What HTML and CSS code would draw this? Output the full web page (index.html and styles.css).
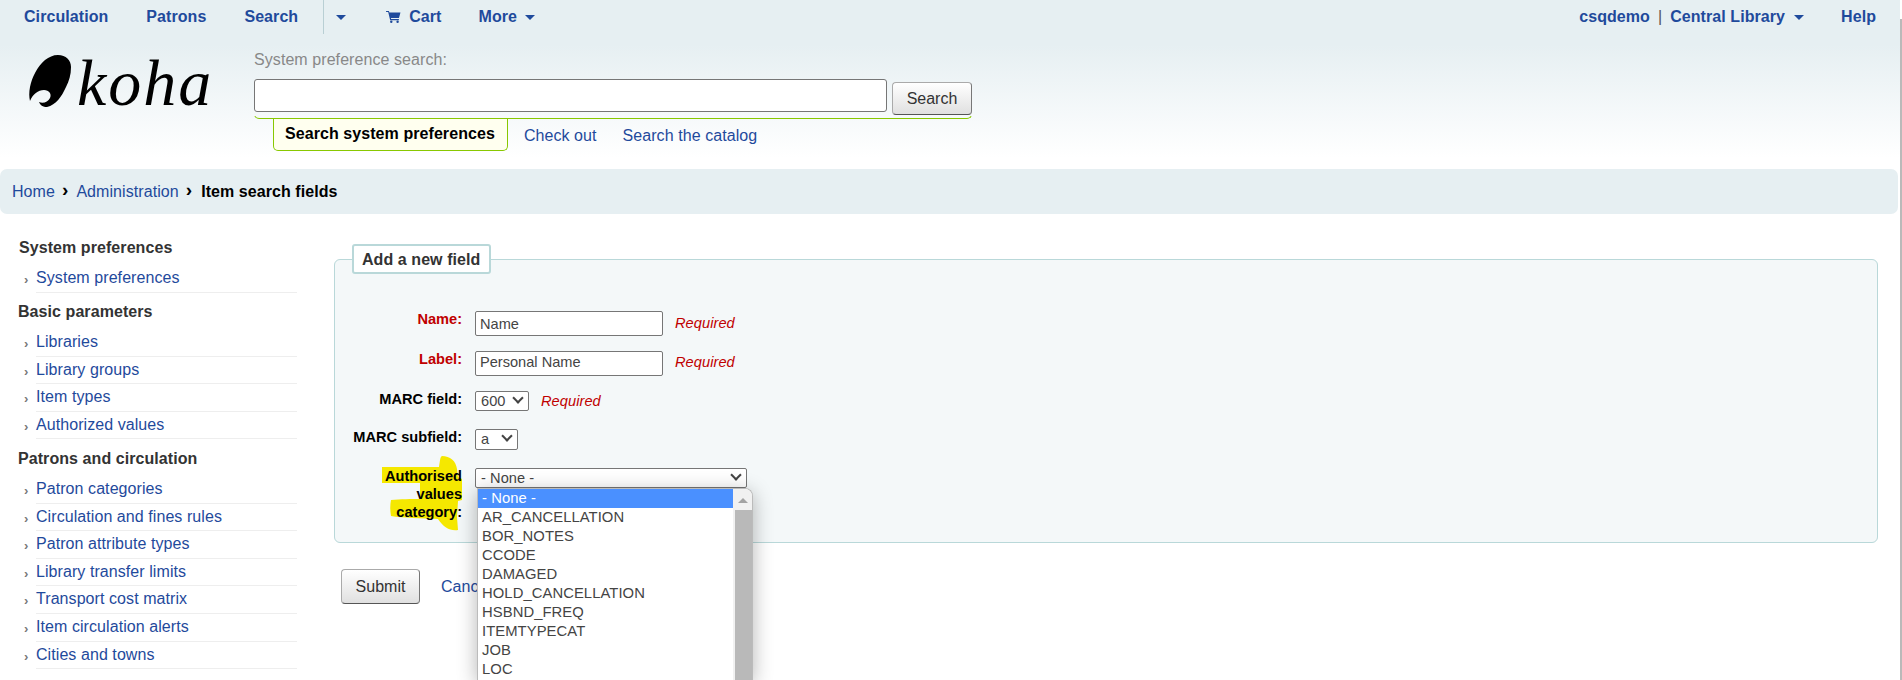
FILE: index.html
```html
<!DOCTYPE html>
<html lang="en">
<head>
    <meta charset="UTF-8">
    <title>Koha - Item search fields</title>
    <link rel="stylesheet" href="styles.css">
</head>
<body>
    <div class="header">
        <div class="navbar">
            <ul class="nav-left">
                <li><a href="#">Circulation</a></li>
                <li><a href="#">Patrons</a></li>
                <li class="nav-search"><a href="#">Search</a></li>
                <li class="nav-arrow"><span class="caret"></span></li>
                <li class="nav-cart">
                    <svg class="cart-icon" viewBox="0 0 16 14" width="15" height="13">
                        <path d="M0 1h3l.6 1.6H15.5l-1.6 6H5.2l.3 1.2h8.3v1.2H4.4L2.3 2.2H0z" fill="#1f4a9c"/>
                        <circle cx="5.6" cy="12.6" r="1.3" fill="#1f4a9c"/>
                        <circle cx="12.4" cy="12.6" r="1.3" fill="#1f4a9c"/>
                    </svg>
                    <a href="#">Cart</a>
                </li>
                <li class="nav-more"><a href="#">More</a><span class="caret caret-after"></span></li>
            </ul>
            <ul class="nav-right">
                <li class="user-info"><a href="#">csqdemo</a><span class="sep">|</span><a href="#">Central Library</a><span class="caret caret-after"></span></li>
                <li><a href="#">Help</a></li>
            </ul>
        </div>
        <div class="masthead">
            <div class="logo">
                <svg viewBox="0 0 43 52" width="43" height="52">
                    <path d="M29 0C37 0 42 5 42 12C42 20 40 26 37 32C33 41 27 50 18 52C14 52 11 50 10 47C14 49 19 47 21 43C23 39 20 35 15 35C9 35 4 39 1 46C0 42 0 37 1 32C3 22 8 12 16 5C20 2 24 0 29 0Z" fill="#000"/>
                </svg>
                <span class="logo-text">koha</span>
            </div>
            <div class="search-box">
                <label class="search-label">System preference search:</label>
                <div class="search-row">
                    <input type="text" class="search-input">
                    <button class="btn btn-search">Search</button>
                </div>
                <div class="tabs-rule"></div>
                <div class="tabs">
                    <span class="tab-active">Search system preferences</span>
                    <a href="#">Check out</a>
                    <a href="#">Search the catalog</a>
                </div>
            </div>
        </div>
    </div>

    <div class="breadcrumb">
        <a href="#">Home</a><span class="crumb-sep">›</span><a href="#">Administration</a><span class="crumb-sep">›</span><strong>Item search fields</strong>
    </div>

    <div class="main">
        <div class="sidebar">
            <h5 class="first">System preferences</h5>
            <ul>
                <li><a href="#">System preferences</a></li>
            </ul>
            <h5>Basic parameters</h5>
            <ul>
                <li><a href="#">Libraries</a></li>
                <li><a href="#">Library groups</a></li>
                <li><a href="#">Item types</a></li>
                <li><a href="#">Authorized values</a></li>
            </ul>
            <h5>Patrons and circulation</h5>
            <ul>
                <li><a href="#">Patron categories</a></li>
                <li><a href="#">Circulation and fines rules</a></li>
                <li><a href="#">Patron attribute types</a></li>
                <li><a href="#">Library transfer limits</a></li>
                <li><a href="#">Transport cost matrix</a></li>
                <li><a href="#">Item circulation alerts</a></li>
                <li><a href="#">Cities and towns</a></li>
            </ul>
        </div>

        <div class="content">
            <fieldset class="rows">
                <legend>Add a new field</legend>
                <div class="form-row row-name">
                    <label class="required">Name:</label>
                    <input type="text" value="Name">
                    <span class="req-note">Required</span>
                </div>
                <div class="form-row row-label">
                    <label class="required">Label:</label>
                    <input type="text" value="Personal Name">
                    <span class="req-note">Required</span>
                </div>
                <div class="form-row row-field">
                    <label>MARC field:</label>
                    <span class="fake-select sel-field">600</span>
                    <span class="req-note">Required</span>
                </div>
                <div class="form-row row-sub">
                    <label>MARC subfield:</label>
                    <span class="fake-select sel-sub">a</span>
                </div>
                <div class="form-row row-auth">
                    <label class="auth-label">
                        <svg class="marker" viewBox="0 0 80 76" width="80" height="76">
                            <path d="M0 12H57C58 6 58 2 60 1C68 1 74 6 75 14L76 22L80 24V45L76 46L75 62L76 75C68 76 62 73 56 64C40 63 20 63 9 61C8 55 8 50 9 45C18 44 30 44 38 44V28H0Z" fill="#f5e800"/>
                        </svg>
                        <span class="auth-text">Authorised values category:</span>
                    </label>
                    <div class="select-wrap">
                        <span class="fake-select sel-auth">- None -</span>
                        <div class="dropdown">
                            <div class="options">
                                <div class="option selected">- None -</div>
                                <div class="option">AR_CANCELLATION</div>
                                <div class="option">BOR_NOTES</div>
                                <div class="option">CCODE</div>
                                <div class="option">DAMAGED</div>
                                <div class="option">HOLD_CANCELLATION</div>
                                <div class="option">HSBND_FREQ</div>
                                <div class="option">ITEMTYPECAT</div>
                                <div class="option">JOB</div>
                                <div class="option">LOC</div>
                            </div>
                            <div class="list-scroll"><span class="scroll-up"></span><span class="scroll-thumb"></span></div>
                        </div>
                    </div>
                </div>
            </fieldset>
            <div class="actions">
                <button class="btn btn-submit">Submit</button>
                <a href="#" class="cancel">Cancel</a>
            </div>
        </div>
    </div>
    <div class="page-scroll"></div>
</body>
</html>
```

FILE: styles.css
```css
:root {
    --link: #1f4a9c;
    --pale: #e6eff2;
    --green: #88c800;
    --red: #c00000;
}

html, body {
    height: 680px;
    overflow: hidden;
}

body {
    margin: 0;
    padding: 0;
    background-color: white;
    font-family: "Liberation Sans", Arial, sans-serif;
    font-size: 16px;
    letter-spacing: 0.07px;
    color: #333;
}

a {
    color: var(--link);
    text-decoration: none;
}

ul {
    list-style: none;
    margin: 0;
    padding: 0;
}

.header {
    height: 169px;
    margin-right: 2px;
    background: linear-gradient(to bottom, var(--pale) 0, var(--pale) 45px, #fff 158px);
}

.navbar {
    display: flex;
    justify-content: space-between;
    height: 34px;
    font-weight: bold;
}

.nav-left, .nav-right {
    display: flex;
}

.nav-left li, .nav-right li {
    padding-top: 8px;
}

.navbar a {
    line-height: 16px;
}

.nav-left li {
    margin-left: 24px;
    margin-right: 14px;
}

.nav-left li.nav-search {
    margin-right: 0;
    padding-right: 25px;
    border-right: 1px solid #b9cfd4;
}

.nav-left li.nav-arrow {
    margin-left: 12px;
    margin-right: 40px;
}

.nav-left li.nav-cart {
    margin-left: 0;
    margin-right: 37px;
    padding-top: 9px;
    display: flex;
    align-items: flex-start;
}

.nav-left li.nav-more {
    margin-left: 0;
}

.cart-icon {
    margin: 1px 8px 0 0;
}

.caret {
    display: inline-block;
    width: 0;
    height: 0;
    border-top: 5px solid var(--link);
    border-left: 5px solid transparent;
    border-right: 5px solid transparent;
    vertical-align: 2px;
}

.caret-after {
    margin-left: 8px;
}

.user-info .caret-after {
    margin-left: 9px;
}

.nav-right {
    padding-right: 24px;
}

.user-info {
    margin-right: 37px;
}

.sep {
    margin: 0 8px;
    font-weight: normal;
    color: #555;
}

.masthead {
    display: flex;
}

.logo {
    display: flex;
    gap: 5px;
    width: 254px;
    padding: 21px 0 0 29px;
    box-sizing: border-box;
    height: 80px;
    color: #000;
}

.logo-text {
    font-family: "Liberation Serif", serif;
    font-style: italic;
    font-size: 66px;
    line-height: 60px;
    letter-spacing: 2px;
    margin-top: -2px;
}

.search-box {
    position: relative;
    width: 718px;
}

.search-label {
    display: block;
    margin-top: 18px;
    height: 27px;
    line-height: 16px;
    color: #888;
}

.search-row {
    display: flex;
    gap: 5px;
}

.search-input {
    box-sizing: border-box;
    width: 633px;
    height: 33px;
    margin: 0;
    border: 1px solid #767676;
    border-radius: 3px;
    background: #fff;
}

.btn {
    box-sizing: border-box;
    border: 1px solid #aaa;
    border-bottom-color: #555;
    border-right-color: #777;
    border-radius: 4px;
    background: linear-gradient(to bottom, #fff, #e0e0e0);
    font-family: "Liberation Sans", Arial, sans-serif;
    font-size: 16px;
    color: #333;
    padding: 0;
}

.btn-search {
    width: 80px;
    height: 33px;
    margin-top: 3px;
}

.tabs-rule {
    box-sizing: border-box;
    height: 6px;
    margin-top: -2px;
    border-bottom: 1px solid var(--green);
    border-left: 1px solid var(--green);
    border-right: 1px solid var(--green);
    border-radius: 0 0 5px 5px;
    clip-path: inset(3px 0 0 0);
}

.tabs {
    display: flex;
    align-items: flex-start;
    margin-left: 19px;
    height: 32px;
}

.tab-active {
    box-sizing: border-box;
    height: 33px;
    margin-top: -1px;
    padding: 8px 12px 0 11px;
    border: 1px solid var(--green);
    border-top: 0;
    border-radius: 0 0 5px 5px;
    background: #ffffef;
    color: #000;
    font-weight: bold;
    line-height: 16px;
}

.tabs a {
    margin-top: 9px;
    margin-left: 16px;
    margin-right: 10px;
    line-height: 16px;
}

.breadcrumb {
    box-sizing: border-box;
    height: 45px;
    margin-right: 4px;
    padding: 14px 12px 0;
    background: var(--pale);
    border-radius: 7px;
    line-height: 16px;
}

.breadcrumb strong {
    margin-left: 1px;
    color: #000;
}

.crumb-sep {
    margin: 0 8px 0 7px;
    color: #000;
    font-weight: bold;
    font-size: 19px;
    line-height: 14px;
    vertical-align: 1px;
}

.main {
    display: flex;
}

.sidebar {
    box-sizing: border-box;
    width: 334px;
    padding-left: 18px;
}

.sidebar h5 {
    margin: 9.5px 0 7px;
    font-size: 16px;
    line-height: 20px;
    color: #333;
    font-weight: bold;
}

.sidebar h5.first {
    margin-top: 24px;
    padding-left: 1px;
}

.sidebar li {
    box-sizing: border-box;
    position: relative;
    width: 261px;
    height: 27.6px;
    margin-left: 18px;
    border-bottom: 1px solid #eeeeee;
    line-height: 18px;
    padding-top: 4px;
}

.sidebar li::before {
    content: "›";
    position: absolute;
    left: -12px;
    top: 7px;
    color: #777;
    font-size: 13px;
    font-weight: bold;
    line-height: 15px;
}

.content {
    flex: 1;
    padding-top: 30px;
}

fieldset.rows {
    box-sizing: border-box;
    width: 1544px;
    height: 299px;
    margin: 0;
    padding: 0;
    background: #f4f8f9;
    border: 1px solid #b9d8d9;
    border-radius: 6px;
}

legend {
    box-sizing: border-box;
    height: 30px;
    margin-left: 17px;
    padding: 6px 9px 4px 8px;
    background: #fff;
    border: 2px solid #b9d8d9;
    border-radius: 3px;
    font-weight: bold;
    font-size: 16px;
    line-height: 16px;
    color: #333;
}

.form-row {
    display: flex;
    align-items: flex-start;
}

.form-row label {
    width: 120px;
    margin: -1px 13px 0 7px;
    text-align: right;
    font-weight: bold;
    font-size: 14.6px;
    letter-spacing: 0;
    line-height: 18px;
    color: #000;
    flex-shrink: 0;
}

.form-row label.required {
    color: var(--red);
}

.form-row .auth-label {
    width: 100px;
    margin-left: 27px;
}

.form-row input {
    box-sizing: border-box;
    width: 188px;
    height: 25px;
    margin: 0;
    padding: 0 4px;
    border: 1px solid #767676;
    border-radius: 2px;
    background: #fff;
    font-family: "Liberation Sans", Arial, sans-serif;
    font-size: 14.6px;
    color: #444;
}

.row-label input {
    padding-bottom: 3px;
}

.req-note {
    margin-left: 12px;
    margin-top: 3px;
    font-size: 14.6px;
    font-style: italic;
    color: var(--red);
    line-height: 18px;
}

.row-name {
    margin-top: 37px;
}

.row-label {
    margin-top: 15px;
}

.row-field {
    margin-top: 15px;
}

.row-sub {
    margin-top: 18px;
}

.row-auth {
    margin-top: 18px;
}

.row-label .req-note {
    margin-top: 2px;
}

.fake-select {
    position: relative;
    display: block;
    box-sizing: border-box;
    height: 20px;
    padding-left: 5px;
    border: 1px solid #767676;
    border-radius: 2px;
    background: #fff;
    font-size: 14.6px;
    line-height: 18px;
    color: #444;
}

.fake-select::after {
    content: "";
    position: absolute;
    right: 6px;
    top: 2px;
    box-sizing: border-box;
    width: 8px;
    height: 8px;
    border-right: 2px solid #444;
    border-bottom: 2px solid #444;
    transform: rotate(45deg);
}

.sel-field {
    width: 54px;
}

.sel-sub {
    width: 43px;
    height: 21px;
}

.sel-auth {
    width: 272px;
}

.row-field .req-note {
    margin-top: 1px;
}

.auth-label {
    position: relative;
}

.auth-text {
    position: relative;
}

.marker {
    position: absolute;
    left: 20px;
    top: -12px;
}

.select-wrap {
    position: relative;
}

.dropdown {
    position: absolute;
    left: 2px;
    top: 20px;
    width: 276px;
    height: 192px;
    display: flex;
    box-sizing: border-box;
    background: #fff;
    border: 1px solid #bbb;
    border-bottom: 0;
    border-radius: 0 8px 0 0;
    box-shadow: 0 4px 20px rgba(0, 0, 0, 0.3);
    overflow: hidden;
    z-index: 5;
}

.options {
    flex: 1;
}

.option {
    height: 19px;
    padding-left: 4px;
    font-size: 14.8px;
    line-height: 19px;
    color: #444;
}

.option.selected {
    background: #4a90ff;
    color: #fff;
}

.list-scroll {
    position: relative;
    width: 19px;
    background: #f1f1f1;
}

.scroll-up {
    position: absolute;
    left: 5px;
    top: 9px;
    border-bottom: 5px solid #a3a3a3;
    border-left: 5px solid transparent;
    border-right: 5px solid transparent;
}

.scroll-thumb {
    position: absolute;
    left: 2px;
    right: 0;
    top: 21px;
    bottom: 0;
    background: #b9b9b9;
}

.actions {
    display: flex;
    align-items: center;
    margin-top: 26px;
    padding-left: 7px;
}

.btn-submit {
    width: 79px;
    height: 35px;
}

.cancel {
    margin-left: 21px;
}

.page-scroll {
    position: absolute;
    right: 0;
    top: 19px;
    bottom: 0;
    width: 2px;
    background: #b9b9b9;
}
```
